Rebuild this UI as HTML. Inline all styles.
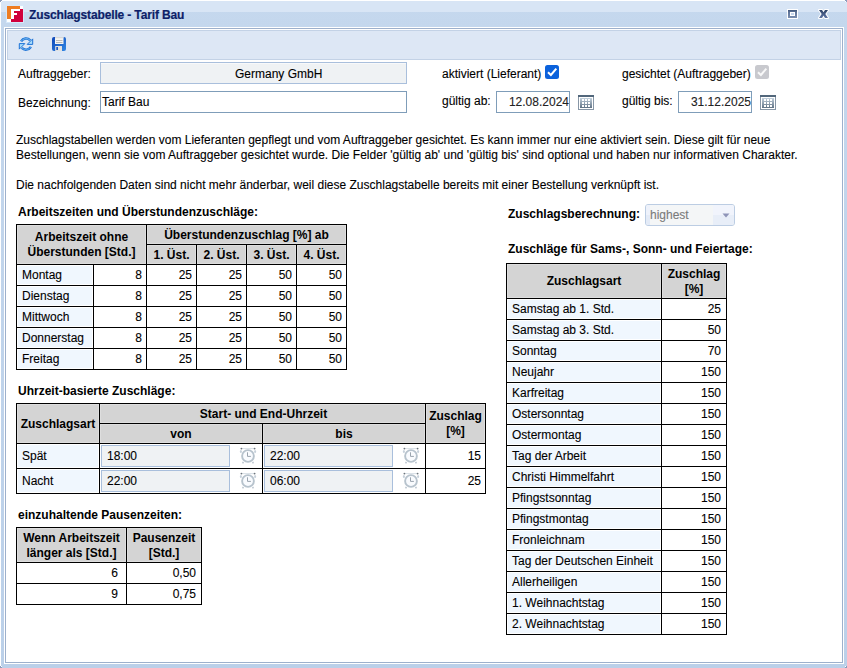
<!DOCTYPE html>
<html><head><meta charset="utf-8"><title>Zuschlagstabelle - Tarif Bau</title>
<style>
html,body{margin:0;padding:0}
body{width:847px;height:668px;overflow:hidden;position:relative;background:linear-gradient(#c5d8ee 0px,#c4d7ed 27px,#bbd0e9 668px);font-family:'Liberation Sans',sans-serif;font-size:12px}
.t{position:absolute;white-space:pre;line-height:15px;font-size:12px;font-family:'Liberation Sans',sans-serif}
.n{-webkit-text-stroke:0.1px currentColor}
.r{position:absolute;box-sizing:border-box}
svg{position:absolute;overflow:visible}
</style></head><body>

<div class="r" style="left:0px;top:0px;width:847px;height:12px;background:#d8e5f5"></div>
<div class="r" style="left:0px;top:0px;width:847px;height:1px;background:#fff"></div>
<div class="r" style="left:0px;top:0px;width:1px;height:668px;background:#fff"></div>
<div class="r" style="left:0px;top:0px;width:2px;height:1px;background:#8a9cbc"></div>
<div class="r" style="left:0px;top:1px;width:1px;height:1px;background:#8a9cbc"></div>
<div class="r" style="left:1px;top:1px;width:1px;height:1px;background:#fff"></div>
<div class="r" style="left:845px;top:0px;width:2px;height:1px;background:#8a9cbc"></div>
<div class="r" style="left:846px;top:1px;width:1px;height:1px;background:#8a9cbc"></div>
<div class="r" style="left:845px;top:1px;width:1px;height:1px;background:#fff"></div>
<div class="r" style="left:0px;top:667px;width:2px;height:1px;background:#8a9cbc"></div>
<div class="r" style="left:0px;top:666px;width:1px;height:1px;background:#8a9cbc"></div>
<div class="r" style="left:1px;top:666px;width:1px;height:1px;background:#fff"></div>
<div class="r" style="left:845px;top:667px;width:2px;height:1px;background:#8a9cbc"></div>
<div class="r" style="left:846px;top:666px;width:1px;height:1px;background:#8a9cbc"></div>
<div class="r" style="left:845px;top:666px;width:1px;height:1px;background:#fff"></div>
<svg style="left:0;top:0" width="30" height="30" viewBox="0 0 30 30" shape-rendering="crispEdges">
<rect x="6" y="5" width="18" height="18" fill="#d6e8fa"/>
<rect x="7" y="6" width="13" height="3" fill="#ee7d22"/>
<rect x="7" y="6" width="4" height="13" fill="#ee7d22"/>
<rect x="20" y="6" width="3" height="3" fill="#fff"/>
<rect x="7" y="19" width="4" height="3" fill="#fff"/>
<rect x="11" y="9" width="12" height="13" fill="#d0003c"/>
<rect x="11" y="9" width="3" height="10" fill="#fff"/>
<rect x="11" y="9" width="9" height="2" fill="#fff"/>
<rect x="11" y="13" width="6" height="2" fill="#fff"/>
</svg>
<div class="t" style="left:29px;top:8px;font-weight:bold;color:#0d1f68;letter-spacing:-0.14px;-webkit-text-stroke:0.2px #0d1f68">Zuschlagstabelle - Tarif Bau</div>
<svg style="left:786px;top:8px" width="14" height="12" viewBox="0 0 14 12" shape-rendering="crispEdges">
<defs><linearGradient id="mx" x1="0" y1="0" x2="0" y2="1"><stop offset="0" stop-color="#3f5579"/><stop offset="0.25" stop-color="#5d7296"/><stop offset="1" stop-color="#7a8eb0"/></linearGradient></defs>
<rect x="1" y="1" width="11" height="10" fill="#fff"/>
<rect x="2" y="2" width="9" height="8" fill="url(#mx)"/>
<rect x="4" y="4" width="5" height="4" fill="#fff"/>
<rect x="5" y="5" width="3" height="2" fill="#c6d6ec"/>
</svg>
<svg style="left:816px;top:8px" width="16" height="12" viewBox="0 0 16 12">
<defs><linearGradient id="cx" x1="0" y1="0" x2="0" y2="1"><stop offset="0" stop-color="#2e4266"/><stop offset="1" stop-color="#5f76a6"/></linearGradient></defs>
<path d="M3 2 L6 2 L7.5 4.3 L9 2 L12 2 L9.3 5.9 L12 10 L9 10 L7.5 7.6 L6 10 L3 10 L5.7 5.9 Z" fill="#fff" stroke="#fff" stroke-width="2" stroke-linejoin="round"/>
<path d="M3 2 L6 2 L7.5 4.3 L9 2 L12 2 L9.3 5.9 L12 10 L9 10 L7.5 7.6 L6 10 L3 10 L5.7 5.9 Z" fill="url(#cx)"/>
</svg>
<div class="r" style="left:4px;top:27px;width:840px;height:637px;background:#fff"></div>
<div class="r" style="left:5px;top:28px;width:838px;height:635px;border:1px solid #9db0cc;background:#fff"></div>
<div class="r" style="left:7px;top:30px;width:834px;height:30px;border:1px solid #c3d2e6;background:#dde7f5"></div>
<svg style="left:19px;top:37px" width="14" height="14" viewBox="0 0 14 14">
<path d="M2.1 4.3 A5.8 5.8 0 0 1 11.2 3.3" stroke="#1d72d6" stroke-width="2.5" fill="none"/>
<path d="M2.1 4.3 A5.8 5.8 0 0 1 11.2 3.3" stroke="#86c8f5" stroke-width="0.8" fill="none"/>
<path d="M13.7 1.9 L13.7 7.4 L8.2 7.4 Z" fill="#a8dcfa" stroke="#1d72d6" stroke-width="1" stroke-linejoin="round"/>
<path d="M11.9 9.9 A5.8 5.8 0 0 1 2.8 10.9" stroke="#1d72d6" stroke-width="2.5" fill="none"/>
<path d="M11.9 9.9 A5.8 5.8 0 0 1 2.8 10.9" stroke="#6cb4ee" stroke-width="0.8" fill="none"/>
<path d="M0.3 12.1 L0.3 6.6 L5.8 6.6 Z" fill="#a8dcfa" stroke="#1d72d6" stroke-width="1" stroke-linejoin="round"/>
</svg>
<svg style="left:52px;top:37px" width="14" height="14" viewBox="0 0 14 14">
<defs><linearGradient id="sg" x1="0" y1="0" x2="1" y2="1"><stop offset="0" stop-color="#0f47b8"/><stop offset="1" stop-color="#3288e4"/></linearGradient></defs>
<rect x="0" y="0" width="14" height="14" rx="2" fill="url(#sg)"/>
<rect x="3" y="0" width="8.5" height="7" fill="#f4f4f2"/>
<rect x="3" y="0" width="8.5" height="1.2" fill="#d8d8d8"/>
<rect x="4" y="3" width="6.5" height="0.9" fill="#b4b4b4"/>
<rect x="4" y="5" width="6.5" height="0.9" fill="#b4b4b4"/>
<rect x="3.2" y="9" width="6.8" height="5" fill="#e2e2e0"/>
<rect x="4.3" y="10" width="1.7" height="3" fill="#1a58c4"/>
</svg>
<div class="t n" style="left:18px;top:67px;font-weight:normal;color:#000;">Auftraggeber:</div>
<div class="t n" style="left:18px;top:96px;font-weight:normal;color:#000;">Bezeichnung:</div>
<div class="r" style="left:100px;top:62px;width:307px;height:22px;border:1px solid #a9bfdc;background:#eff2f4"></div>
<div class="r" style="left:101px;top:63px;width:305px;height:1px;background:#f8f9fa"></div>
<div class="t n" style="left:235px;top:67px;font-weight:normal;color:#000;">Germany GmbH</div>
<div class="r" style="left:100px;top:91px;width:307px;height:22px;border:1px solid #7f9db9;background:#fff"></div>
<div class="t n" style="left:102px;top:95px;font-weight:normal;color:#000;">Tarif Bau</div>
<div class="t n" style="left:442px;top:67px;font-weight:normal;color:#000;">aktiviert (Lieferant)</div>
<svg style="left:545px;top:65px" width="14" height="14" viewBox="0 0 14 14">
<rect x="0" y="0" width="14" height="14" rx="2.5" fill="#0b62dc"/>
<path d="M3 7.2 L5.9 10 L11.3 3.6" stroke="#fff" stroke-width="2" fill="none" stroke-linecap="butt"/>
</svg>
<div class="t n" style="left:622px;top:67px;font-weight:normal;color:#000;">gesichtet (Auftraggeber)</div>
<svg style="left:755px;top:65px" width="14" height="14" viewBox="0 0 14 14">
<rect x="0" y="0" width="14" height="14" rx="2.5" fill="#c8c9ce"/>
<path d="M3 7.2 L5.9 10 L11.3 3.6" stroke="#f8f8f8" stroke-width="2" fill="none" stroke-linecap="butt"/>
</svg>
<div class="t n" style="left:442px;top:94px;font-weight:normal;color:#000;">gültig ab:</div>
<div class="r" style="left:496px;top:91px;width:74px;height:22px;border:1px solid #7f9db9;background:#fff"></div>
<div class="t n" style="right:278px;top:95px;font-weight:normal;color:#222;text-align:right;">12.08.2024</div>
<div class="t n" style="left:622px;top:94px;font-weight:normal;color:#000;">gültig bis:</div>
<div class="r" style="left:678px;top:91px;width:74px;height:22px;border:1px solid #7f9db9;background:#fff"></div>
<div class="t n" style="right:96px;top:95px;font-weight:normal;color:#222;text-align:right;">31.12.2025</div>
<svg style="left:578px;top:95px" width="16" height="15" viewBox="0 0 16 15" shape-rendering="crispEdges">
<defs><linearGradient id="cg578" x1="0" y1="0" x2="0" y2="1"><stop offset="0" stop-color="#c4d2de"/><stop offset="1" stop-color="#607284"/></linearGradient></defs>
<rect x="0" y="0" width="16" height="15" rx="1" fill="#8796a6"/>
<rect x="0" y="0" width="16" height="2" fill="#52677b"/>
<rect x="1" y="2" width="14" height="12" fill="#fff"/>
<rect x="2" y="3" width="12" height="10" fill="url(#cg578)"/>
<rect x="4" y="4" width="2" height="2" fill="#fff"/><rect x="7" y="4" width="2" height="2" fill="#fff"/><rect x="10" y="4" width="2" height="2" fill="#fff"/>
<rect x="4" y="7" width="2" height="2" fill="#fff"/><rect x="7" y="7" width="2" height="2" fill="#fff"/><rect x="10" y="7" width="2" height="2" fill="#fff"/>
<rect x="4" y="10" width="2" height="2" fill="#fff"/><rect x="7" y="10" width="2" height="2" fill="#fff"/><rect x="10" y="10" width="2" height="2" fill="#fff"/>
</svg>
<svg style="left:760px;top:95px" width="16" height="15" viewBox="0 0 16 15" shape-rendering="crispEdges">
<defs><linearGradient id="cg760" x1="0" y1="0" x2="0" y2="1"><stop offset="0" stop-color="#c4d2de"/><stop offset="1" stop-color="#607284"/></linearGradient></defs>
<rect x="0" y="0" width="16" height="15" rx="1" fill="#8796a6"/>
<rect x="0" y="0" width="16" height="2" fill="#52677b"/>
<rect x="1" y="2" width="14" height="12" fill="#fff"/>
<rect x="2" y="3" width="12" height="10" fill="url(#cg760)"/>
<rect x="4" y="4" width="2" height="2" fill="#fff"/><rect x="7" y="4" width="2" height="2" fill="#fff"/><rect x="10" y="4" width="2" height="2" fill="#fff"/>
<rect x="4" y="7" width="2" height="2" fill="#fff"/><rect x="7" y="7" width="2" height="2" fill="#fff"/><rect x="10" y="7" width="2" height="2" fill="#fff"/>
<rect x="4" y="10" width="2" height="2" fill="#fff"/><rect x="7" y="10" width="2" height="2" fill="#fff"/><rect x="10" y="10" width="2" height="2" fill="#fff"/>
</svg>
<div class="t n" style="left:16px;top:133px;font-weight:normal;color:#000;">Zuschlagstabellen werden vom Lieferanten gepflegt und vom Auftraggeber gesichtet. Es kann immer nur eine aktiviert sein. Diese gilt für neue</div>
<div class="t n" style="left:16px;top:148px;font-weight:normal;color:#000;">Bestellungen, wenn sie vom Auftraggeber gesichtet wurde. Die Felder 'gültig ab' und 'gültig bis' sind optional und haben nur informativen Charakter.</div>
<div class="t n" style="left:16px;top:178px;font-weight:normal;color:#000;">Die nachfolgenden Daten sind nicht mehr änderbar, weil diese Zuschlagstabelle bereits mit einer Bestellung verknüpft ist.</div>
<div class="t" style="left:18px;top:205px;font-weight:bold;color:#000;">Arbeitszeiten und Überstundenzuschläge:</div>
<div class="r" style="left:17px;top:225px;width:129px;height:39px;background:#d4d4d4;box-shadow:inset 0 0 0 1px #dedede"></div>
<div class="r" style="left:147px;top:225px;width:199px;height:19px;background:#d4d4d4;box-shadow:inset 0 0 0 1px #dedede"></div>
<div class="r" style="left:147px;top:245px;width:49px;height:19px;background:#d4d4d4;box-shadow:inset 0 0 0 1px #dedede"></div>
<div class="r" style="left:197px;top:245px;width:49px;height:19px;background:#d4d4d4;box-shadow:inset 0 0 0 1px #dedede"></div>
<div class="r" style="left:247px;top:245px;width:49px;height:19px;background:#d4d4d4;box-shadow:inset 0 0 0 1px #dedede"></div>
<div class="r" style="left:297px;top:245px;width:49px;height:19px;background:#d4d4d4;box-shadow:inset 0 0 0 1px #dedede"></div>
<div class="r" style="left:17px;top:265px;width:76px;height:20px;background:#f0f7fe;box-shadow:inset 0 0 0 1px #fff"></div>
<div class="r" style="left:17px;top:286px;width:76px;height:20px;background:#f0f7fe;box-shadow:inset 0 0 0 1px #fff"></div>
<div class="r" style="left:17px;top:307px;width:76px;height:20px;background:#f0f7fe;box-shadow:inset 0 0 0 1px #fff"></div>
<div class="r" style="left:17px;top:328px;width:76px;height:20px;background:#f0f7fe;box-shadow:inset 0 0 0 1px #fff"></div>
<div class="r" style="left:17px;top:349px;width:76px;height:20px;background:#f0f7fe;box-shadow:inset 0 0 0 1px #fff"></div>
<div class="r" style="left:16px;top:224px;width:331px;height:1px;background:#000"></div>
<div class="r" style="left:146px;top:244px;width:201px;height:1px;background:#000"></div>
<div class="r" style="left:16px;top:264px;width:331px;height:1px;background:#000"></div>
<div class="r" style="left:16px;top:285px;width:331px;height:1px;background:#000"></div>
<div class="r" style="left:16px;top:306px;width:331px;height:1px;background:#000"></div>
<div class="r" style="left:16px;top:327px;width:331px;height:1px;background:#000"></div>
<div class="r" style="left:16px;top:348px;width:331px;height:1px;background:#000"></div>
<div class="r" style="left:16px;top:369px;width:331px;height:1px;background:#000"></div>
<div class="r" style="left:16px;top:224px;width:1px;height:146px;background:#000"></div>
<div class="r" style="left:146px;top:224px;width:1px;height:146px;background:#000"></div>
<div class="r" style="left:346px;top:224px;width:1px;height:146px;background:#000"></div>
<div class="r" style="left:93px;top:264px;width:1px;height:106px;background:#000"></div>
<div class="r" style="left:196px;top:244px;width:1px;height:126px;background:#000"></div>
<div class="r" style="left:246px;top:244px;width:1px;height:126px;background:#000"></div>
<div class="r" style="left:296px;top:244px;width:1px;height:126px;background:#000"></div>
<div class="t" style="left:17px;width:129px;top:230px;font-weight:bold;color:#000;text-align:center;">Arbeitszeit ohne
Überstunden [Std.]</div>
<div class="t" style="left:147px;width:199px;top:228px;font-weight:bold;color:#000;text-align:center;">Überstundenzuschlag [%] ab</div>
<div class="t" style="left:147px;width:49px;top:248px;font-weight:bold;color:#000;text-align:center;">1. Üst.</div>
<div class="t" style="left:197px;width:49px;top:248px;font-weight:bold;color:#000;text-align:center;">2. Üst.</div>
<div class="t" style="left:247px;width:49px;top:248px;font-weight:bold;color:#000;text-align:center;">3. Üst.</div>
<div class="t" style="left:297px;width:49px;top:248px;font-weight:bold;color:#000;text-align:center;">4. Üst.</div>
<div class="t n" style="left:22px;top:268px;font-weight:normal;color:#000;">Montag</div>
<div class="t n" style="right:705px;top:268px;font-weight:normal;color:#000;text-align:right;">8</div>
<div class="t n" style="right:655px;top:268px;font-weight:normal;color:#000;text-align:right;">25</div>
<div class="t n" style="right:605px;top:268px;font-weight:normal;color:#000;text-align:right;">25</div>
<div class="t n" style="right:555px;top:268px;font-weight:normal;color:#000;text-align:right;">50</div>
<div class="t n" style="right:505px;top:268px;font-weight:normal;color:#000;text-align:right;">50</div>
<div class="t n" style="left:22px;top:289px;font-weight:normal;color:#000;">Dienstag</div>
<div class="t n" style="right:705px;top:289px;font-weight:normal;color:#000;text-align:right;">8</div>
<div class="t n" style="right:655px;top:289px;font-weight:normal;color:#000;text-align:right;">25</div>
<div class="t n" style="right:605px;top:289px;font-weight:normal;color:#000;text-align:right;">25</div>
<div class="t n" style="right:555px;top:289px;font-weight:normal;color:#000;text-align:right;">50</div>
<div class="t n" style="right:505px;top:289px;font-weight:normal;color:#000;text-align:right;">50</div>
<div class="t n" style="left:22px;top:310px;font-weight:normal;color:#000;">Mittwoch</div>
<div class="t n" style="right:705px;top:310px;font-weight:normal;color:#000;text-align:right;">8</div>
<div class="t n" style="right:655px;top:310px;font-weight:normal;color:#000;text-align:right;">25</div>
<div class="t n" style="right:605px;top:310px;font-weight:normal;color:#000;text-align:right;">25</div>
<div class="t n" style="right:555px;top:310px;font-weight:normal;color:#000;text-align:right;">50</div>
<div class="t n" style="right:505px;top:310px;font-weight:normal;color:#000;text-align:right;">50</div>
<div class="t n" style="left:22px;top:331px;font-weight:normal;color:#000;">Donnerstag</div>
<div class="t n" style="right:705px;top:331px;font-weight:normal;color:#000;text-align:right;">8</div>
<div class="t n" style="right:655px;top:331px;font-weight:normal;color:#000;text-align:right;">25</div>
<div class="t n" style="right:605px;top:331px;font-weight:normal;color:#000;text-align:right;">25</div>
<div class="t n" style="right:555px;top:331px;font-weight:normal;color:#000;text-align:right;">50</div>
<div class="t n" style="right:505px;top:331px;font-weight:normal;color:#000;text-align:right;">50</div>
<div class="t n" style="left:22px;top:352px;font-weight:normal;color:#000;">Freitag</div>
<div class="t n" style="right:705px;top:352px;font-weight:normal;color:#000;text-align:right;">8</div>
<div class="t n" style="right:655px;top:352px;font-weight:normal;color:#000;text-align:right;">25</div>
<div class="t n" style="right:605px;top:352px;font-weight:normal;color:#000;text-align:right;">25</div>
<div class="t n" style="right:555px;top:352px;font-weight:normal;color:#000;text-align:right;">50</div>
<div class="t n" style="right:505px;top:352px;font-weight:normal;color:#000;text-align:right;">50</div>
<div class="t" style="left:18px;top:384px;font-weight:bold;color:#000;">Uhrzeit-basierte Zuschläge:</div>
<div class="r" style="left:17px;top:404px;width:82px;height:39px;background:#d4d4d4;box-shadow:inset 0 0 0 1px #dedede"></div>
<div class="r" style="left:100px;top:404px;width:325px;height:19px;background:#d4d4d4;box-shadow:inset 0 0 0 1px #dedede"></div>
<div class="r" style="left:100px;top:424px;width:162px;height:19px;background:#d4d4d4;box-shadow:inset 0 0 0 1px #dedede"></div>
<div class="r" style="left:263px;top:424px;width:162px;height:19px;background:#d4d4d4;box-shadow:inset 0 0 0 1px #dedede"></div>
<div class="r" style="left:426px;top:404px;width:59px;height:39px;background:#d4d4d4;box-shadow:inset 0 0 0 1px #dedede"></div>
<div class="r" style="left:17px;top:444px;width:82px;height:24px;background:#f0f7fe;box-shadow:inset 0 0 0 1px #fff"></div>
<div class="r" style="left:17px;top:469px;width:82px;height:24px;background:#f0f7fe;box-shadow:inset 0 0 0 1px #fff"></div>
<div class="r" style="left:16px;top:403px;width:470px;height:1px;background:#000"></div>
<div class="r" style="left:16px;top:443px;width:470px;height:1px;background:#000"></div>
<div class="r" style="left:16px;top:468px;width:470px;height:1px;background:#000"></div>
<div class="r" style="left:16px;top:493px;width:470px;height:1px;background:#000"></div>
<div class="r" style="left:99px;top:423px;width:327px;height:1px;background:#000"></div>
<div class="r" style="left:16px;top:403px;width:1px;height:91px;background:#000"></div>
<div class="r" style="left:99px;top:403px;width:1px;height:91px;background:#000"></div>
<div class="r" style="left:425px;top:403px;width:1px;height:91px;background:#000"></div>
<div class="r" style="left:485px;top:403px;width:1px;height:91px;background:#000"></div>
<div class="r" style="left:262px;top:423px;width:1px;height:71px;background:#000"></div>
<div class="t" style="left:17px;width:82px;top:417px;font-weight:bold;color:#000;text-align:center;">Zuschlagsart</div>
<div class="t" style="left:101px;width:325px;top:407px;font-weight:bold;color:#000;text-align:center;">Start- und End-Uhrzeit</div>
<div class="t" style="left:100px;width:162px;top:427px;font-weight:bold;color:#000;text-align:center;">von</div>
<div class="t" style="left:263px;width:162px;top:427px;font-weight:bold;color:#000;text-align:center;">bis</div>
<div class="t" style="left:426px;width:59px;top:409px;font-weight:bold;color:#000;text-align:center;">Zuschlag
[%]</div>
<div class="t n" style="left:22px;top:449px;font-weight:normal;color:#000;">Spät</div>
<div class="r" style="left:101px;top:445px;width:129px;height:22px;border:1px solid #a9bfdc;background:#eff2f4"></div>
<div class="t n" style="left:107px;top:449px;font-weight:normal;color:#000;">18:00</div>
<svg style="left:240px;top:448px" width="17" height="17" viewBox="0 0 17 17">
<path d="M1.3 0.6 L14.7 0.6" stroke="#d8dfe6" stroke-width="1"/>
<circle cx="1.4" cy="0.6" r="0.9" fill="#6d747c"/><circle cx="14.6" cy="0.6" r="0.9" fill="#6d747c"/>
<ellipse cx="0.9" cy="3.4" rx="1" ry="1.5" fill="#c6d0da"/><ellipse cx="15.1" cy="3.4" rx="1" ry="1.5" fill="#c6d0da"/>
<path d="M3.4 13.8 L2.6 15.4 M12.6 13.8 L13.4 15.4" stroke="#bcc6d0" stroke-width="1.5"/>
<circle cx="8" cy="8" r="5.9" fill="#f9fbfe" stroke="#b7c3cd" stroke-width="1.9"/>
<path d="M7.5 4.3 L7.5 8.4 L10.9 8.4" stroke="#9aa4ae" stroke-width="1" fill="none"/>
</svg>
<div class="r" style="left:264px;top:445px;width:129px;height:22px;border:1px solid #a9bfdc;background:#eff2f4"></div>
<div class="t n" style="left:270px;top:449px;font-weight:normal;color:#000;">22:00</div>
<svg style="left:403px;top:448px" width="17" height="17" viewBox="0 0 17 17">
<path d="M1.3 0.6 L14.7 0.6" stroke="#d8dfe6" stroke-width="1"/>
<circle cx="1.4" cy="0.6" r="0.9" fill="#6d747c"/><circle cx="14.6" cy="0.6" r="0.9" fill="#6d747c"/>
<ellipse cx="0.9" cy="3.4" rx="1" ry="1.5" fill="#c6d0da"/><ellipse cx="15.1" cy="3.4" rx="1" ry="1.5" fill="#c6d0da"/>
<path d="M3.4 13.8 L2.6 15.4 M12.6 13.8 L13.4 15.4" stroke="#bcc6d0" stroke-width="1.5"/>
<circle cx="8" cy="8" r="5.9" fill="#f9fbfe" stroke="#b7c3cd" stroke-width="1.9"/>
<path d="M7.5 4.3 L7.5 8.4 L10.9 8.4" stroke="#9aa4ae" stroke-width="1" fill="none"/>
</svg>
<div class="t n" style="right:366px;top:449px;font-weight:normal;color:#000;text-align:right;">15</div>
<div class="t n" style="left:22px;top:474px;font-weight:normal;color:#000;">Nacht</div>
<div class="r" style="left:101px;top:470px;width:129px;height:22px;border:1px solid #a9bfdc;background:#eff2f4"></div>
<div class="t n" style="left:107px;top:474px;font-weight:normal;color:#000;">22:00</div>
<svg style="left:240px;top:473px" width="17" height="17" viewBox="0 0 17 17">
<path d="M1.3 0.6 L14.7 0.6" stroke="#d8dfe6" stroke-width="1"/>
<circle cx="1.4" cy="0.6" r="0.9" fill="#6d747c"/><circle cx="14.6" cy="0.6" r="0.9" fill="#6d747c"/>
<ellipse cx="0.9" cy="3.4" rx="1" ry="1.5" fill="#c6d0da"/><ellipse cx="15.1" cy="3.4" rx="1" ry="1.5" fill="#c6d0da"/>
<path d="M3.4 13.8 L2.6 15.4 M12.6 13.8 L13.4 15.4" stroke="#bcc6d0" stroke-width="1.5"/>
<circle cx="8" cy="8" r="5.9" fill="#f9fbfe" stroke="#b7c3cd" stroke-width="1.9"/>
<path d="M7.5 4.3 L7.5 8.4 L10.9 8.4" stroke="#9aa4ae" stroke-width="1" fill="none"/>
</svg>
<div class="r" style="left:264px;top:470px;width:129px;height:22px;border:1px solid #a9bfdc;background:#eff2f4"></div>
<div class="t n" style="left:270px;top:474px;font-weight:normal;color:#000;">06:00</div>
<svg style="left:403px;top:473px" width="17" height="17" viewBox="0 0 17 17">
<path d="M1.3 0.6 L14.7 0.6" stroke="#d8dfe6" stroke-width="1"/>
<circle cx="1.4" cy="0.6" r="0.9" fill="#6d747c"/><circle cx="14.6" cy="0.6" r="0.9" fill="#6d747c"/>
<ellipse cx="0.9" cy="3.4" rx="1" ry="1.5" fill="#c6d0da"/><ellipse cx="15.1" cy="3.4" rx="1" ry="1.5" fill="#c6d0da"/>
<path d="M3.4 13.8 L2.6 15.4 M12.6 13.8 L13.4 15.4" stroke="#bcc6d0" stroke-width="1.5"/>
<circle cx="8" cy="8" r="5.9" fill="#f9fbfe" stroke="#b7c3cd" stroke-width="1.9"/>
<path d="M7.5 4.3 L7.5 8.4 L10.9 8.4" stroke="#9aa4ae" stroke-width="1" fill="none"/>
</svg>
<div class="t n" style="right:366px;top:474px;font-weight:normal;color:#000;text-align:right;">25</div>
<div class="t" style="left:18px;top:508px;font-weight:bold;color:#000;">einzuhaltende Pausenzeiten:</div>
<div class="r" style="left:17px;top:528px;width:109px;height:34px;background:#d4d4d4;box-shadow:inset 0 0 0 1px #dedede"></div>
<div class="r" style="left:127px;top:528px;width:74px;height:34px;background:#d4d4d4;box-shadow:inset 0 0 0 1px #dedede"></div>
<div class="r" style="left:16px;top:527px;width:186px;height:1px;background:#000"></div>
<div class="r" style="left:16px;top:562px;width:186px;height:1px;background:#000"></div>
<div class="r" style="left:16px;top:583px;width:186px;height:1px;background:#000"></div>
<div class="r" style="left:16px;top:604px;width:186px;height:1px;background:#000"></div>
<div class="r" style="left:16px;top:527px;width:1px;height:78px;background:#000"></div>
<div class="r" style="left:126px;top:527px;width:1px;height:78px;background:#000"></div>
<div class="r" style="left:201px;top:527px;width:1px;height:78px;background:#000"></div>
<div class="t" style="left:17px;width:109px;top:531px;font-weight:bold;color:#000;text-align:center;">Wenn Arbeitszeit
länger als [Std.]</div>
<div class="t" style="left:127px;width:74px;top:531px;font-weight:bold;color:#000;text-align:center;">Pausenzeit
[Std.]</div>
<div class="t n" style="right:729px;top:566px;font-weight:normal;color:#000;text-align:right;">6</div>
<div class="t n" style="right:651px;top:566px;font-weight:normal;color:#000;text-align:right;">0,50</div>
<div class="t n" style="right:729px;top:587px;font-weight:normal;color:#000;text-align:right;">9</div>
<div class="t n" style="right:651px;top:587px;font-weight:normal;color:#000;text-align:right;">0,75</div>
<div class="t" style="left:508px;top:207px;font-weight:bold;color:#000;">Zuschlagsberechnung:</div>
<div class="r" style="left:645px;top:204px;width:90px;height:22px;border:1px solid #bccde3;border-radius:3px;background:#f4f6f7;overflow:hidden">
<div style="position:absolute;left:0;top:0;width:4px;height:20px;background:linear-gradient(#eef2fb 50%,#e4ebf7 50%)"></div>
<div style="position:absolute;left:67px;top:0;width:21px;height:20px;background:linear-gradient(#f1f4fc 50%,#e8eef8 50%)"></div>
<svg style="left:76px;top:8px" width="8" height="5" viewBox="0 0 8 5"><path d="M0.5 0.5 L7.5 0.5 L4 4.5 Z" fill="#8e94b8"/></svg>
</div>
<div class="t n" style="left:650px;top:208px;font-weight:normal;color:#7a7a7a;">highest</div>
<div class="t" style="left:508px;top:242px;font-weight:bold;color:#000;">Zuschläge für Sams-, Sonn- und Feiertage:</div>
<div class="r" style="left:507px;top:264px;width:154px;height:34px;background:#d4d4d4;box-shadow:inset 0 0 0 1px #dedede"></div>
<div class="r" style="left:662px;top:264px;width:64px;height:34px;background:#d4d4d4;box-shadow:inset 0 0 0 1px #dedede"></div>
<div class="r" style="left:506px;top:263px;width:221px;height:1px;background:#000"></div>
<div class="r" style="left:507px;top:299px;width:154px;height:20px;background:#f0f7fe;box-shadow:inset 0 0 0 1px #fff"></div>
<div class="r" style="left:507px;top:320px;width:154px;height:20px;background:#f0f7fe;box-shadow:inset 0 0 0 1px #fff"></div>
<div class="r" style="left:507px;top:341px;width:154px;height:20px;background:#f0f7fe;box-shadow:inset 0 0 0 1px #fff"></div>
<div class="r" style="left:507px;top:362px;width:154px;height:20px;background:#f0f7fe;box-shadow:inset 0 0 0 1px #fff"></div>
<div class="r" style="left:507px;top:383px;width:154px;height:20px;background:#f0f7fe;box-shadow:inset 0 0 0 1px #fff"></div>
<div class="r" style="left:507px;top:404px;width:154px;height:20px;background:#f0f7fe;box-shadow:inset 0 0 0 1px #fff"></div>
<div class="r" style="left:507px;top:425px;width:154px;height:20px;background:#f0f7fe;box-shadow:inset 0 0 0 1px #fff"></div>
<div class="r" style="left:507px;top:446px;width:154px;height:20px;background:#f0f7fe;box-shadow:inset 0 0 0 1px #fff"></div>
<div class="r" style="left:507px;top:467px;width:154px;height:20px;background:#f0f7fe;box-shadow:inset 0 0 0 1px #fff"></div>
<div class="r" style="left:507px;top:488px;width:154px;height:20px;background:#f0f7fe;box-shadow:inset 0 0 0 1px #fff"></div>
<div class="r" style="left:507px;top:509px;width:154px;height:20px;background:#f0f7fe;box-shadow:inset 0 0 0 1px #fff"></div>
<div class="r" style="left:507px;top:530px;width:154px;height:20px;background:#f0f7fe;box-shadow:inset 0 0 0 1px #fff"></div>
<div class="r" style="left:507px;top:551px;width:154px;height:20px;background:#f0f7fe;box-shadow:inset 0 0 0 1px #fff"></div>
<div class="r" style="left:507px;top:572px;width:154px;height:20px;background:#f0f7fe;box-shadow:inset 0 0 0 1px #fff"></div>
<div class="r" style="left:507px;top:593px;width:154px;height:20px;background:#f0f7fe;box-shadow:inset 0 0 0 1px #fff"></div>
<div class="r" style="left:507px;top:614px;width:154px;height:20px;background:#f0f7fe;box-shadow:inset 0 0 0 1px #fff"></div>
<div class="r" style="left:506px;top:298px;width:221px;height:1px;background:#000"></div>
<div class="r" style="left:506px;top:319px;width:221px;height:1px;background:#000"></div>
<div class="r" style="left:506px;top:340px;width:221px;height:1px;background:#000"></div>
<div class="r" style="left:506px;top:361px;width:221px;height:1px;background:#000"></div>
<div class="r" style="left:506px;top:382px;width:221px;height:1px;background:#000"></div>
<div class="r" style="left:506px;top:403px;width:221px;height:1px;background:#000"></div>
<div class="r" style="left:506px;top:424px;width:221px;height:1px;background:#000"></div>
<div class="r" style="left:506px;top:445px;width:221px;height:1px;background:#000"></div>
<div class="r" style="left:506px;top:466px;width:221px;height:1px;background:#000"></div>
<div class="r" style="left:506px;top:487px;width:221px;height:1px;background:#000"></div>
<div class="r" style="left:506px;top:508px;width:221px;height:1px;background:#000"></div>
<div class="r" style="left:506px;top:529px;width:221px;height:1px;background:#000"></div>
<div class="r" style="left:506px;top:550px;width:221px;height:1px;background:#000"></div>
<div class="r" style="left:506px;top:571px;width:221px;height:1px;background:#000"></div>
<div class="r" style="left:506px;top:592px;width:221px;height:1px;background:#000"></div>
<div class="r" style="left:506px;top:613px;width:221px;height:1px;background:#000"></div>
<div class="r" style="left:506px;top:634px;width:221px;height:1px;background:#000"></div>
<div class="r" style="left:506px;top:263px;width:1px;height:372px;background:#000"></div>
<div class="r" style="left:661px;top:263px;width:1px;height:372px;background:#000"></div>
<div class="r" style="left:726px;top:263px;width:1px;height:372px;background:#000"></div>
<div class="t" style="left:507px;width:154px;top:274px;font-weight:bold;color:#000;text-align:center;">Zuschlagsart</div>
<div class="t" style="left:662px;width:64px;top:267px;font-weight:bold;color:#000;text-align:center;">Zuschlag
[%]</div>
<div class="t n" style="left:512px;top:302px;font-weight:normal;color:#000;">Samstag ab 1. Std.</div>
<div class="t n" style="right:126px;top:302px;font-weight:normal;color:#000;text-align:right;">25</div>
<div class="t n" style="left:512px;top:323px;font-weight:normal;color:#000;">Samstag ab 3. Std.</div>
<div class="t n" style="right:126px;top:323px;font-weight:normal;color:#000;text-align:right;">50</div>
<div class="t n" style="left:512px;top:344px;font-weight:normal;color:#000;">Sonntag</div>
<div class="t n" style="right:126px;top:344px;font-weight:normal;color:#000;text-align:right;">70</div>
<div class="t n" style="left:512px;top:365px;font-weight:normal;color:#000;">Neujahr</div>
<div class="t n" style="right:126px;top:365px;font-weight:normal;color:#000;text-align:right;">150</div>
<div class="t n" style="left:512px;top:386px;font-weight:normal;color:#000;">Karfreitag</div>
<div class="t n" style="right:126px;top:386px;font-weight:normal;color:#000;text-align:right;">150</div>
<div class="t n" style="left:512px;top:407px;font-weight:normal;color:#000;">Ostersonntag</div>
<div class="t n" style="right:126px;top:407px;font-weight:normal;color:#000;text-align:right;">150</div>
<div class="t n" style="left:512px;top:428px;font-weight:normal;color:#000;">Ostermontag</div>
<div class="t n" style="right:126px;top:428px;font-weight:normal;color:#000;text-align:right;">150</div>
<div class="t n" style="left:512px;top:449px;font-weight:normal;color:#000;">Tag der Arbeit</div>
<div class="t n" style="right:126px;top:449px;font-weight:normal;color:#000;text-align:right;">150</div>
<div class="t n" style="left:512px;top:470px;font-weight:normal;color:#000;">Christi Himmelfahrt</div>
<div class="t n" style="right:126px;top:470px;font-weight:normal;color:#000;text-align:right;">150</div>
<div class="t n" style="left:512px;top:491px;font-weight:normal;color:#000;">Pfingstsonntag</div>
<div class="t n" style="right:126px;top:491px;font-weight:normal;color:#000;text-align:right;">150</div>
<div class="t n" style="left:512px;top:512px;font-weight:normal;color:#000;">Pfingstmontag</div>
<div class="t n" style="right:126px;top:512px;font-weight:normal;color:#000;text-align:right;">150</div>
<div class="t n" style="left:512px;top:533px;font-weight:normal;color:#000;">Fronleichnam</div>
<div class="t n" style="right:126px;top:533px;font-weight:normal;color:#000;text-align:right;">150</div>
<div class="t n" style="left:512px;top:554px;font-weight:normal;color:#000;">Tag der Deutschen Einheit</div>
<div class="t n" style="right:126px;top:554px;font-weight:normal;color:#000;text-align:right;">150</div>
<div class="t n" style="left:512px;top:575px;font-weight:normal;color:#000;">Allerheiligen</div>
<div class="t n" style="right:126px;top:575px;font-weight:normal;color:#000;text-align:right;">150</div>
<div class="t n" style="left:512px;top:596px;font-weight:normal;color:#000;">1. Weihnachtstag</div>
<div class="t n" style="right:126px;top:596px;font-weight:normal;color:#000;text-align:right;">150</div>
<div class="t n" style="left:512px;top:617px;font-weight:normal;color:#000;">2. Weihnachtstag</div>
<div class="t n" style="right:126px;top:617px;font-weight:normal;color:#000;text-align:right;">150</div>
</body></html>
